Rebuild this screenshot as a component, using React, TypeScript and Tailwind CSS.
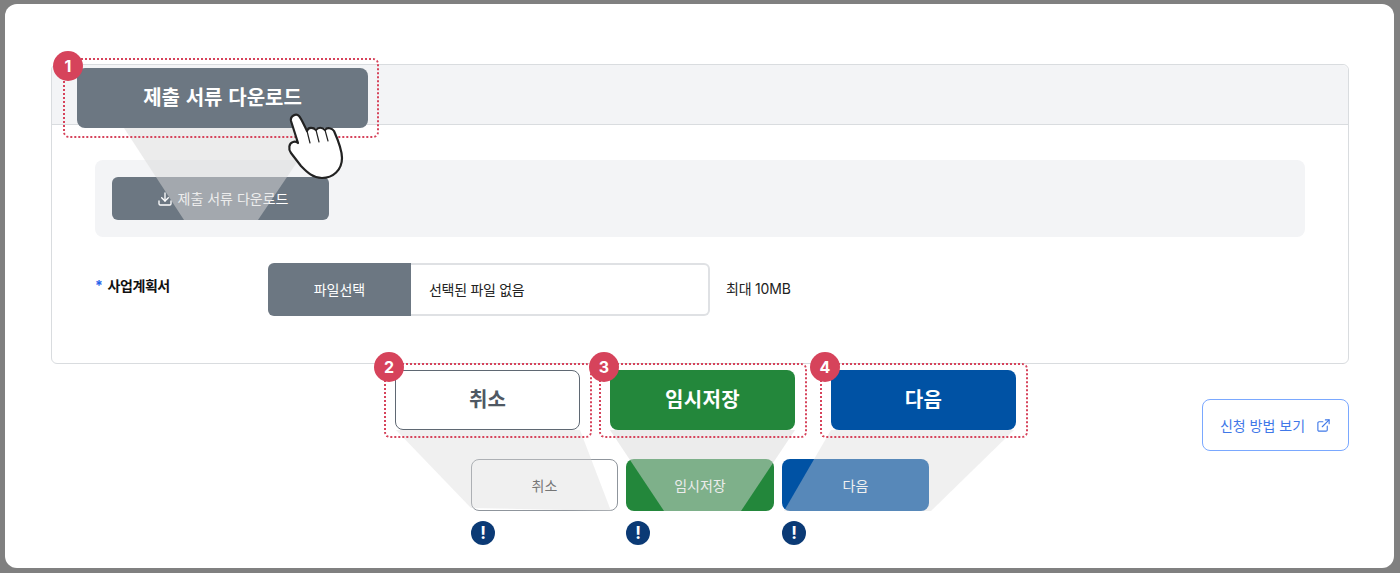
import { Download, ExternalLink } from "lucide-react";

const font = { fontFamily: 'Inter, "Noto Sans CJK KR", sans-serif' };

const highlights = [
  { num: "1", box: "left-[63px] top-[58px] w-[316px] h-[80px]", badge: "left-[53px] top-[51px]" },
  { num: "2", box: "left-[384px] top-[363px] w-[208px] h-[75px]", badge: "left-[374px] top-[352px]" },
  { num: "3", box: "left-[599px] top-[363px] w-[208px] h-[75px]", badge: "left-[589px] top-[352px]" },
  { num: "4", box: "left-[820px] top-[363px] w-[208px] h-[75px]", badge: "left-[810px] top-[352px]" },
];

const Notice = () => (
  <div className="mt-[10px] flex h-[24px] w-[24px] items-center justify-center rounded-full bg-[#0b3a75] text-[17px] font-bold leading-none text-white">
    !
  </div>
);

const App = () => {
  return (
    <div
      className="relative h-[573px] w-[1400px] overflow-hidden bg-[#808080] pb-[5px] pl-[5px] pr-[6px] pt-[4px]"
      style={font}
    >
      <div className="h-full w-full rounded-[12px] bg-white pl-[46px] pr-[45px] pt-[60px]">
        {/* main panel */}
        <div className="h-[300px] rounded-[6px] border border-[#d9dcdf]">
          <div className="h-[60px] rounded-t-[6px] border-b border-[#d9dcdf] bg-[#f3f4f6] pl-[25px] pt-[3px]">
            <div className="flex h-[60px] w-[291px] items-center justify-center rounded-[8px] bg-[#6c7782] text-[20px] font-bold text-white [word-spacing:1px]">
              제출 서류 다운로드
            </div>
          </div>
          <div className="px-[43px] pt-[35px]">
            <div className="h-[77px] rounded-[8px] bg-[#f3f4f6] p-[17px]">
              <div className="flex h-[43px] w-[217px] items-center justify-center gap-[5px] rounded-[6px] bg-[#6c7782] pl-[4px] text-[14px] text-white">
                <Download size={16} strokeWidth={2} />
                <span>제출 서류 다운로드</span>
              </div>
            </div>
            <div className="mt-[26px] flex items-start">
              <div className="w-[173px] pt-[12px] text-[14px] font-bold leading-[22px] tracking-[-0.4px] text-[#111]">
                <span className="mr-[5px] text-[#2563eb]">*</span>
                사업계획서
              </div>
              <div className="flex h-[53px] w-[442px]">
                <div className="flex w-[143px] shrink-0 items-center justify-center rounded-l-[6px] bg-[#6c7782] text-[14px] text-white">
                  파일선택
                </div>
                <div className="flex flex-1 items-center rounded-r-[6px] border-2 border-l-0 border-[#dfe1e4] pl-[18px] text-[14px] tracking-[-0.3px] text-[#222]">
                  선택된 파일 없음
                </div>
              </div>
              <div className="ml-[16px] pt-[15px] text-[14px] leading-[22px] tracking-[-0.2px] text-[#222]">최대 10MB</div>
            </div>
          </div>
        </div>

        {/* actions */}
        <div className="mt-[6px] flex h-[60px] items-start pl-[344px]">
          <div className="flex h-[60px] w-[185px] items-center justify-center rounded-[8px] border border-[#5f6873] bg-white text-[20px] font-bold text-[#4f5863]">
            취소
          </div>
          <div className="ml-[30px] flex h-[60px] w-[185px] items-center justify-center rounded-[8px] bg-[#23873b] text-[20px] font-bold tracking-[0.3px] text-white">
            임시저장
          </div>
          <div className="ml-[36px] flex h-[60px] w-[185px] items-center justify-center rounded-[8px] bg-[#0052a4] text-[20px] font-bold tracking-[0.3px] text-white">
            다음
          </div>
          <div className="ml-auto mt-[29px] flex h-[52px] w-[147px] shrink-0 items-center justify-center gap-[11px] rounded-[8px] border border-[#7aa8ff] bg-white text-[14px] text-[#3f78e8]">
            <span>신청 방법 보기</span>
            <ExternalLink size={15} strokeWidth={1.8} />
          </div>
        </div>

        {/* reference buttons */}
        <div className="mt-[29px] flex gap-[8px] pl-[420px]">
          <div className="w-[147px]">
            <div className="flex h-[52px] items-center justify-center rounded-[8px] border border-[#8f959c] bg-white text-[14px] text-[#333]">
              취소
            </div>
            <Notice />
          </div>
          <div className="w-[148px]">
            <div className="flex h-[52px] items-center justify-center rounded-[8px] bg-[#23873b] text-[14px] text-white">
              임시저장
            </div>
            <Notice />
          </div>
          <div className="w-[147px]">
            <div className="flex h-[52px] items-center justify-center rounded-[8px] bg-[#0052a4] text-[14px] text-white">
              다음
            </div>
            <Notice />
          </div>
        </div>
      </div>

      {/* callout beams */}
      <svg className="absolute left-0 top-0" width="1400" height="573" viewBox="0 0 1400 573">
        <g fill="#d9d9d9">
          <polygon fillOpacity="0.5" points="124,128 320,128 258,220 184,220" />
          <polygon fillOpacity="0.4" points="396,430 580,430 611,511 471,508" />
          <polygon fillOpacity="0.5" points="610,430 795,430 741,511 664,511" />
          <polygon fillOpacity="0.4" points="831,430 1014,430 931,511 784,511" />
        </g>
      </svg>

      {highlights.map((h) => (
        <div key={h.num}>
          <div className={`absolute rounded-[6px] border-2 border-dotted border-[#d6435b] ${h.box}`} />
          <div
            className={`absolute flex h-[30px] w-[30px] items-center justify-center rounded-full bg-[#d6435b] text-[16px] font-bold text-white ${h.badge}`}
          >
            {h.num}
          </div>
        </div>
      ))}

      {/* hand cursor */}
      <svg className="absolute left-[285px] top-[110px]" width="65" height="75" viewBox="285 110 65 75">
        <path
          d="M291 121 C290 116 296 113 299 116 C301 118 304 125 307 131 C308 127 313 127 316 130 C318 127 322 127 325 130 C327 127 332 128 334 131 C338 140 342 152 342 158 C342 170 333 178 322 178 C312 178 306 171 301 166 L291 153 C288 149 289 143 293 142 C295 141 297 142 298 143 Z"
          fill="#fff"
          stroke="#222"
          strokeWidth="2.2"
          strokeLinejoin="round"
        />
        <path d="M307 131 L310 143 M316 130 L319 142 M325 130 L328 141" fill="none" stroke="#222" strokeWidth="1.2" strokeLinecap="round" />
      </svg>
    </div>
  );
};

export default App;
